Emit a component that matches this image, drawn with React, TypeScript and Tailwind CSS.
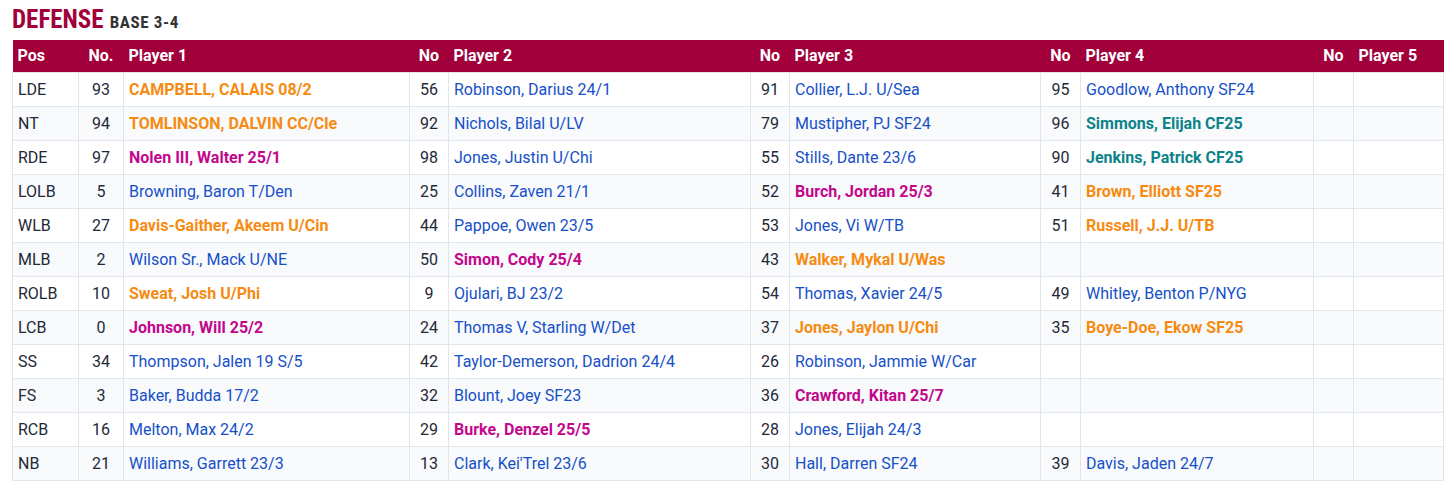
import React from "react";

type Cell = { no: string; name: string; c?: "o" | "m" | "t" };
type Row = { pos: string; p: Cell[] };

const rows: Row[] = [
  { pos: "LDE", p: [{ no: "93", name: "CAMPBELL, CALAIS 08/2", c: "o" }, { no: "56", name: "Robinson, Darius 24/1" }, { no: "91", name: "Collier, L.J. U/Sea" }, { no: "95", name: "Goodlow, Anthony SF24" }] },
  { pos: "NT", p: [{ no: "94", name: "TOMLINSON, DALVIN CC/Cle", c: "o" }, { no: "92", name: "Nichols, Bilal U/LV" }, { no: "79", name: "Mustipher, PJ SF24" }, { no: "96", name: "Simmons, Elijah CF25", c: "t" }] },
  { pos: "RDE", p: [{ no: "97", name: "Nolen III, Walter 25/1", c: "m" }, { no: "98", name: "Jones, Justin U/Chi" }, { no: "55", name: "Stills, Dante 23/6" }, { no: "90", name: "Jenkins, Patrick CF25", c: "t" }] },
  { pos: "LOLB", p: [{ no: "5", name: "Browning, Baron T/Den" }, { no: "25", name: "Collins, Zaven 21/1" }, { no: "52", name: "Burch, Jordan 25/3", c: "m" }, { no: "41", name: "Brown, Elliott SF25", c: "o" }] },
  { pos: "WLB", p: [{ no: "27", name: "Davis-Gaither, Akeem U/Cin", c: "o" }, { no: "44", name: "Pappoe, Owen 23/5" }, { no: "53", name: "Jones, Vi W/TB" }, { no: "51", name: "Russell, J.J. U/TB", c: "o" }] },
  { pos: "MLB", p: [{ no: "2", name: "Wilson Sr., Mack U/NE" }, { no: "50", name: "Simon, Cody 25/4", c: "m" }, { no: "43", name: "Walker, Mykal U/Was", c: "o" }, { no: "", name: "" }] },
  { pos: "ROLB", p: [{ no: "10", name: "Sweat, Josh U/Phi", c: "o" }, { no: "9", name: "Ojulari, BJ 23/2" }, { no: "54", name: "Thomas, Xavier 24/5" }, { no: "49", name: "Whitley, Benton P/NYG" }] },
  { pos: "LCB", p: [{ no: "0", name: "Johnson, Will 25/2", c: "m" }, { no: "24", name: "Thomas V, Starling W/Det" }, { no: "37", name: "Jones, Jaylon U/Chi", c: "o" }, { no: "35", name: "Boye-Doe, Ekow SF25", c: "o" }] },
  { pos: "SS", p: [{ no: "34", name: "Thompson, Jalen 19 S/5" }, { no: "42", name: "Taylor-Demerson, Dadrion 24/4" }, { no: "26", name: "Robinson, Jammie W/Car" }, { no: "", name: "" }] },
  { pos: "FS", p: [{ no: "3", name: "Baker, Budda 17/2" }, { no: "32", name: "Blount, Joey SF23" }, { no: "36", name: "Crawford, Kitan 25/7", c: "m" }, { no: "", name: "" }] },
  { pos: "RCB", p: [{ no: "16", name: "Melton, Max 24/2" }, { no: "29", name: "Burke, Denzel 25/5", c: "m" }, { no: "28", name: "Jones, Elijah 24/3" }, { no: "", name: "" }] },
  { pos: "NB", p: [{ no: "21", name: "Williams, Garrett 23/3" }, { no: "13", name: "Clark, Kei'Trel 23/6" }, { no: "30", name: "Hall, Darren SF24" }, { no: "39", name: "Davis, Jaden 24/7" }] },
];

const tone = {
  o: "text-[#f68b12] font-bold",
  m: "text-[#c3078c] font-bold",
  t: "text-[#0b8389] font-bold",
};

// rows are 34px incl. border; text sits a touch below centre
const td = "border border-[#e1e6ec] h-[34px] pt-[2px] pb-0";

export default function App() {
  return (
    <div className="bg-white w-[1456px] h-[491px] font-['Roboto',sans-serif] text-[16px] text-[#1f2937]">
      <div className="pl-3 pt-[5px] h-[40px] flex items-baseline gap-[6px]">
        <span className="font-['Roboto_Condensed','Liberation_Sans_Narrow','DejaVu_Sans_Condensed',sans-serif] [font-stretch:condensed] font-bold text-[25px] leading-[30px] text-[#a1003b]">
          DEFENSE
        </span>
        <span className="font-['Roboto_Condensed','Liberation_Sans_Narrow','DejaVu_Sans_Condensed',sans-serif] [font-stretch:condensed] font-bold text-[17px] tracking-[0.6px] text-[#333]">
          BASE 3-4
        </span>
      </div>
      <table className="ml-3 w-[1431px] table-fixed border-collapse">
        <colgroup>
          <col className="w-[66px]" />
          <col className="w-[45px]" />
          <col className="w-[286px]" />
          <col className="w-[39px]" />
          <col className="w-[302px]" />
          <col className="w-[39px]" />
          <col className="w-[251px]" />
          <col className="w-[40px]" />
          <col className="w-[233px]" />
          <col className="w-[40px]" />
          <col className="w-[90px]" />
        </colgroup>
        <thead>
          <tr className="bg-[#a1003b] text-white h-[32px]">
            <th className="text-left pl-[5px] pt-[1px] font-bold">Pos</th>
            <th className="text-center pt-[1px] font-bold">No.</th>
            <th className="text-left pl-[5px] pt-[1px] font-bold">Player 1</th>
            <th className="text-center pt-[1px] font-bold">No</th>
            <th className="text-left pl-[5px] pt-[1px] font-bold">Player 2</th>
            <th className="text-center pt-[1px] font-bold">No</th>
            <th className="text-left pl-[5px] pt-[1px] font-bold">Player 3</th>
            <th className="text-center pt-[1px] font-bold">No</th>
            <th className="text-left pl-[5px] pt-[1px] font-bold">Player 4</th>
            <th className="text-center pt-[1px] font-bold">No</th>
            <th className="text-left pl-[5px] pt-[1px] font-bold">Player 5</th>
          </tr>
        </thead>
        <tbody>
          {rows.map((r, i) => (
            <tr key={r.pos} className={i % 2 === 0 ? "bg-white" : "bg-[#f8fafc]"}>
              <td className={`${td} pl-[5px]`}>{r.pos}</td>
              {r.p.map((c, j) => (
                <React.Fragment key={j}>
                  <td className={`${td} text-center`}>{c.no}</td>
                  <td className={`${td} pl-[5px] whitespace-nowrap ${c.c ? tone[c.c] : "text-[#1650c8]"}`}>{c.name}</td>
                </React.Fragment>
              ))}
              <td className={td}></td>
              <td className={td}></td>
            </tr>
          ))}
        </tbody>
      </table>
    </div>
  );
}
